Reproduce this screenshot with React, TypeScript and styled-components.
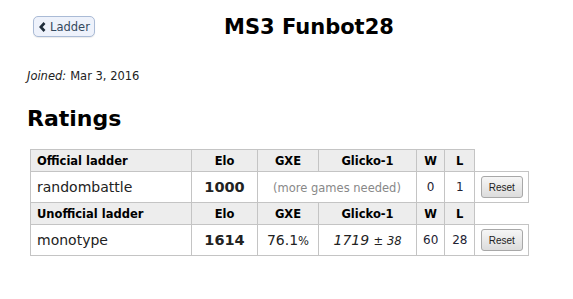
import styled, { createGlobalStyle } from 'styled-components';

const GlobalStyle = createGlobalStyle`
  html, body {
    margin: 0;
    padding: 0;
    background: #fff;
  }
  body {
    font-family: "DejaVu Sans", Verdana, sans-serif;
    color: #000;
  }
`;

const Page = styled.div`
  width: 573px;
  height: 299px;
  padding: 15px 0 0 27px;
  box-sizing: border-box;
`;

const Header = styled.header`
  display: flex;
  align-items: flex-start;
`;

const BackButton = styled.button`
  display: inline-flex;
  align-items: center;
  gap: 4px;
  margin: 1px 0 0 6px;
  height: 21px;
  padding: 0 4px 0 5px;
  font-family: inherit;
  font-size: 11.5px;
  color: #34495e;
  background: #eef2fb;
  border: 1px solid #aabbd6;
  border-radius: 5px;
  box-shadow: 0 1px 1px rgba(0, 0, 0, 0.08);
  cursor: pointer;
`;

const Title = styled.h1`
  flex: 1;
  margin: 0 50px 0 0;
  font-size: 21px;
  line-height: 24px;
  text-align: center;
`;

const Joined = styled.p`
  margin: 30px 0 0;
  font-size: 11.5px;
  color: #222;

  & em {
    margin-right: 4px;
  }
`;

const Heading = styled.h2`
  margin: 22px 0 0;
  font-size: 22px;
  line-height: 28px;
`;

const Ladder = styled.table`
  margin: 16px 0 0 3px;
  border-collapse: collapse;
  table-layout: fixed;
`;

const Th = styled.th<{ $align?: string; $w: number }>`
  width: ${(p) => p.$w}px;
  height: 22px;
  padding: 0 6px;
  box-sizing: border-box;
  font-size: 11.5px;
  text-align: ${(p) => p.$align || 'center'};
  background: #ededed;
  border: 1px solid #c4c4c4;
`;

const BlankTh = styled.th`
  width: 54px;
  padding: 0;
  box-sizing: border-box;
  border: none;
  background: none;
`;

const Td = styled.td<{ $align?: string; $muted?: boolean }>`
  height: 30px;
  padding: 0 6px;
  font-size: 14px;
  text-align: ${(p) => p.$align || 'center'};
  color: ${(p) => (p.$muted ? '#888' : '#222')};
  border: 1px solid #c4c4c4;
  white-space: nowrap;
`;

const ResetCell = styled(Td)`
  padding: 0 4px;
`;

const Small = styled.span`
  font-size: 11.5px;
`;

const Rating = styled.strong`
  font-size: 14.5px;
`;

const Count = styled(Td)`
  font-size: 12px;
  color: #223;
`;

const ResetButton = styled.button`
  height: 22px;
  padding: 0 7px;
  font-family: "Liberation Sans", Arial, sans-serif;
  font-size: 10px;
  color: #222;
  background: linear-gradient(#f6f6f6, #dcdcdc);
  border: 1px solid #a8a8a8;
  border-radius: 3px;
`;

function Chevron() {
  return (
    <svg width="7" height="10" viewBox="0 0 7 10">
      <path d="M5.5 1 L1.8 5 L5.5 9" fill="none" stroke="#1f2d3b" strokeWidth="2.6" />
    </svg>
  );
}

type Row = {
  format: string;
  elo: number;
  gxe?: string;
  glicko?: string;
  rd?: string;
  w: number;
  l: number;
};

function HeaderRow({ label }: { label: string }) {
  return (
    <tr>
      <Th $align="left" $w={161}>{label}</Th>
      <Th $w={66}>Elo</Th>
      <Th $w={61}>GXE</Th>
      <Th $w={98}>Glicko-1</Th>
      <Th $w={26}>W</Th>
      <Th $w={30}>L</Th>
      <BlankTh />
    </tr>
  );
}

function DataRow({ row }: { row: Row }) {
  return (
    <tr>
      <Td $align="left">{row.format}</Td>
      <Td>
        <Rating>{row.elo}</Rating>
      </Td>
      {row.gxe ? (
        <>
          <Td>
            {row.gxe}
            <Small>%</Small>
          </Td>
          <Td>
            <em>{row.glicko}</em>{' '}
            <Small>
              ± <em>{row.rd}</em>
            </Small>
          </Td>
        </>
      ) : (
        <Td colSpan={2} $muted>
          <Small>(more games needed)</Small>
        </Td>
      )}
      <Count>{row.w}</Count>
      <Count>{row.l}</Count>
      <ResetCell>
        <ResetButton>Reset</ResetButton>
      </ResetCell>
    </tr>
  );
}

export default function App() {
  return (
    <Page>
      <GlobalStyle />
      <Header>
        <BackButton>
          <Chevron />
          Ladder
        </BackButton>
        <Title>MS3 Funbot28</Title>
      </Header>
      <Joined>
        <em>Joined:</em>Mar 3, 2016
      </Joined>
      <Heading>Ratings</Heading>
      <Ladder>
        <tbody>
          <HeaderRow label="Official ladder" />
          <DataRow row={{ format: 'randombattle', elo: 1000, w: 0, l: 1 }} />
          <HeaderRow label="Unofficial ladder" />
          <DataRow
            row={{ format: 'monotype', elo: 1614, gxe: '76.1', glicko: '1719', rd: '38', w: 60, l: 28 }}
          />
        </tbody>
      </Ladder>
    </Page>
  );
}
